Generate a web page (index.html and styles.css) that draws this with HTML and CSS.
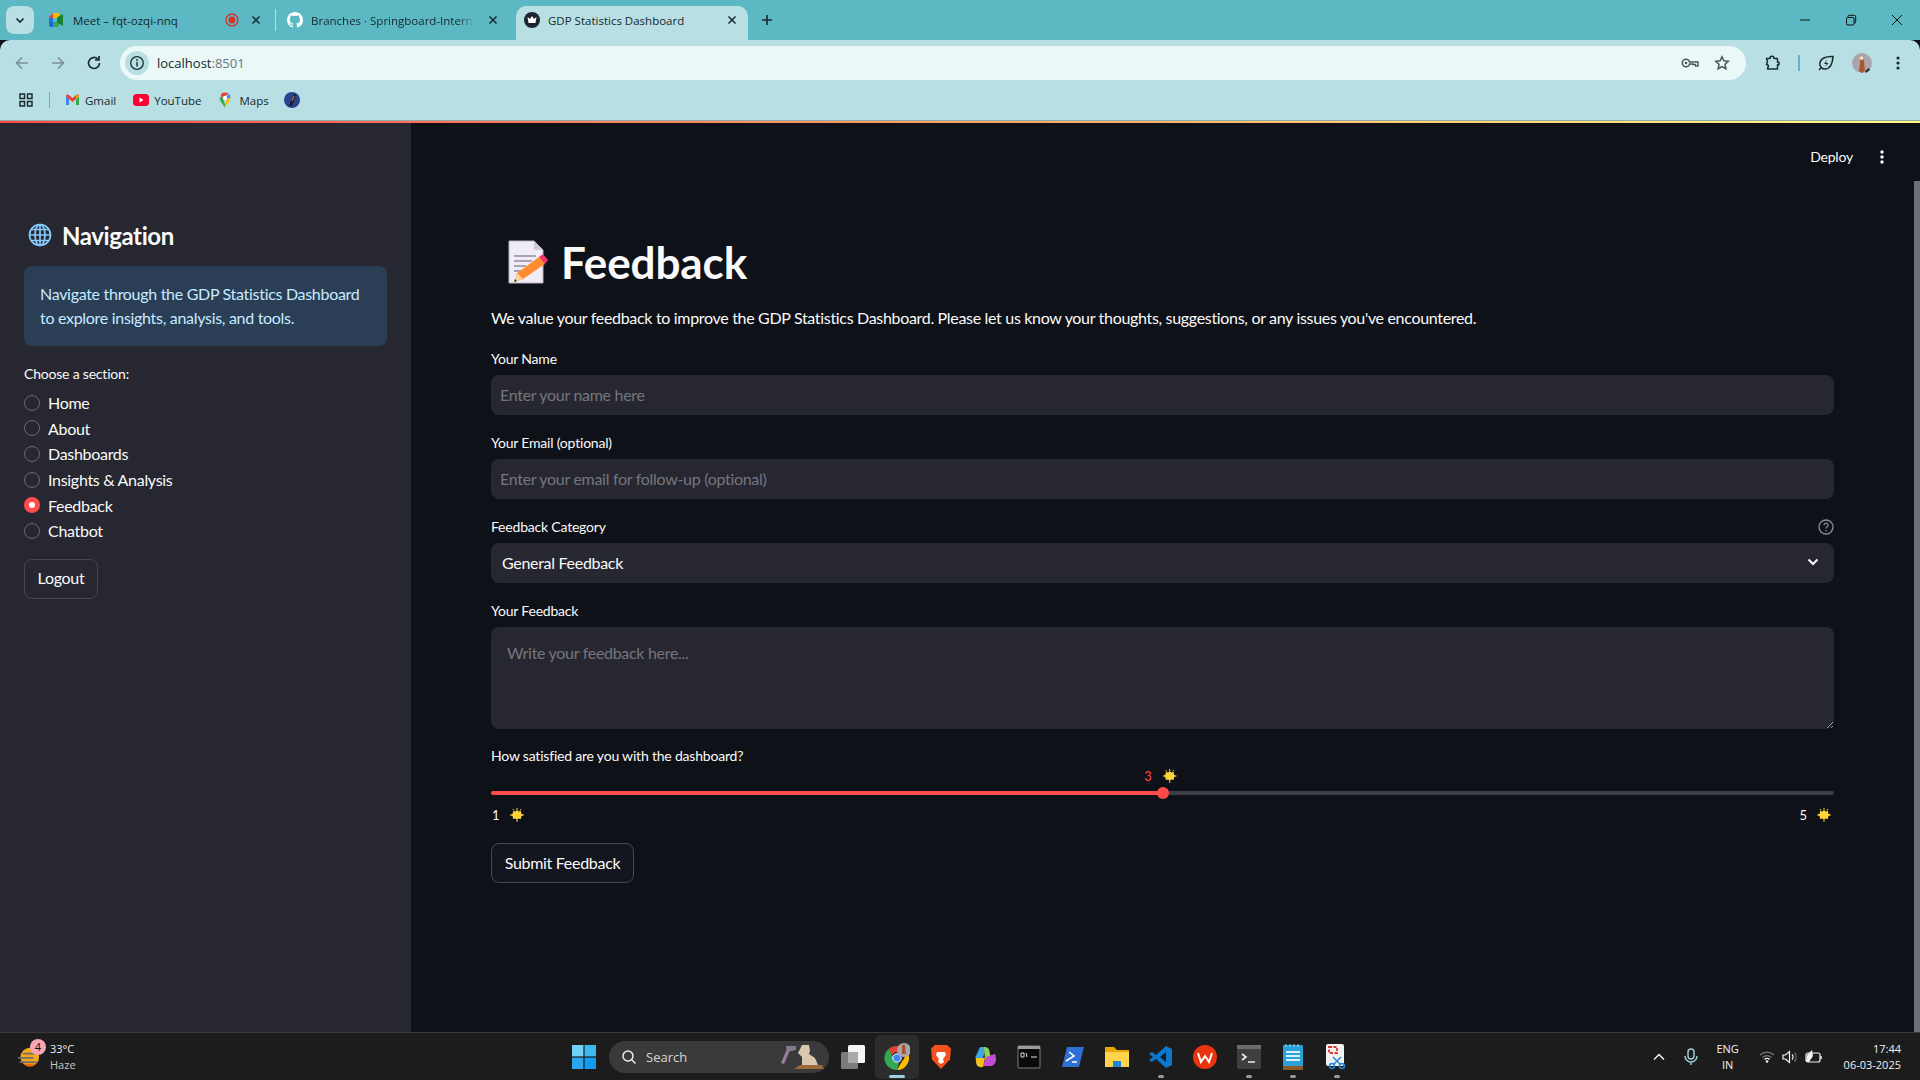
FILE: index.html
```html
<!DOCTYPE html>
<html lang="en">
<head>
  <meta charset="UTF-8" />
  <title>GDP Statistics Dashboard</title>
  <link rel="stylesheet" href="styles.css">
</head>
<body>
  <!-- browser window top -->
  <div class="tabstrip">
    <div class="tab-search"><svg width="12" height="12" viewBox="0 0 12 12"><path d="M2.5 4.5 6 8l3.5-3.5" fill="none" stroke="#16292c" stroke-width="1.7"/></svg></div>
    <div class="tab tab-meet">
      <svg class="favicon" width="16" height="16" viewBox="0 0 16 16"><path d="M1 5 5 1v5H1z" fill="#ea4335"/><path d="M5 1h6v5H5z" fill="#fbbc04"/><path d="M1 6h4v4H1z" fill="#1a73e8"/><path d="M1 10h4v5H3a2 2 0 0 1-2-2z" fill="#1967d2"/><path d="M5 10h6v3a2 2 0 0 1-2 2H5z" fill="#34a853"/><path d="M9 5.5v5l6 3.5V2z" fill="#188038"/></svg>
      <span class="tab-title">Meet – fqt-ozqi-nnq</span>
      <svg class="rec" width="14" height="14" viewBox="0 0 14 14"><circle cx="7" cy="7" r="6" fill="none" stroke="#d93025" stroke-width="1.3"/><circle cx="7" cy="7" r="3.4" fill="#d93025"/></svg>
      <svg class="close" width="10" height="10" viewBox="0 0 10 10"><path d="m1.5 1.5 7 7m0-7-7 7" stroke="#16292c" stroke-width="1.5"/></svg>
    </div>
    <div class="tab-sep"></div>
    <div class="tab tab-github">
      <svg class="favicon" width="16" height="16" viewBox="0 0 16 16"><path fill="#fff" d="M8 0C3.6 0 0 3.6 0 8c0 3.5 2.300 6.500 5.500 7.600.4.100.5-.2.5-.4v-1.400c-2.200.5-2.700-1-2.700-1-.4-.9-.9-1.200-.9-1.200-.7-.5.1-.5.1-.5.8.1 1.200.8 1.200.8.7 1.200 1.900.9 2.300.7.1-.5.3-.9.5-1.100-1.800-.2-3.700-.9-3.700-4 0-.9.3-1.600.8-2.100-.1-.2-.4-1 .1-2.100 0 0 .7-.2 2.200.8a7.600 7.600 0 0 1 4 0c1.500-1 2.200-.8 2.200-.8.4 1.100.2 1.900.1 2.100.5.6.8 1.300.8 2.100 0 3.100-1.900 3.700-3.700 3.900.3.300.6.800.6 1.500v2.200c0 .2.100.5.600.4A8 8 0 0 0 16 8c0-4.400-3.600-8-8-8z"/></svg>
      <span class="tab-title tab-fade">Branches · Springboard-Internsh</span>
      <svg class="close" width="10" height="10" viewBox="0 0 10 10"><path d="m1.5 1.5 7 7m0-7-7 7" stroke="#16292c" stroke-width="1.5"/></svg>
    </div>
    <div class="tab tab-active">
      <svg class="favicon" width="16" height="16" viewBox="0 0 16 16"><circle cx="8" cy="8" r="8" fill="#1d2530"/><path d="M3.500 5 6 7l2-3 2 3 2.500-2-1 6h-7z" fill="#fff"/></svg>
      <span class="tab-title">GDP Statistics Dashboard</span>
      <svg class="close" width="10" height="10" viewBox="0 0 10 10"><path d="m1.5 1.5 7 7m0-7-7 7" stroke="#16292c" stroke-width="1.5"/></svg>
    </div>
    <svg class="new-tab" width="12" height="12" viewBox="0 0 12 12"><path d="M6 1v10M1 6h10" stroke="#16292c" stroke-width="1.6"/></svg>
    <div class="win-controls">
      <svg width="12" height="12" viewBox="0 0 12 12"><path d="M1 6h10" stroke="#111" stroke-width="1"/></svg>
      <svg width="12" height="12" viewBox="0 0 12 12"><path d="M3 3.500V2.500a1.200 1.200 0 0 1 1.200-1.200h5a1.500 1.500 0 0 1 1.500 1.500v5a1.200 1.200 0 0 1-1.200 1.200H9" fill="none" stroke="#111"/><rect x="1.500" y="3.500" width="7.500" height="7.500" rx="1.200" fill="none" stroke="#111"/></svg>
      <svg width="12" height="12" viewBox="0 0 12 12"><path d="m1 1 10 10m0-10L1 11" stroke="#111" stroke-width="1"/></svg>
    </div>
  </div>

  <div class="toolbar">
    <svg class="nav-icon" width="16" height="16" viewBox="0 0 16 16"><path d="M14 8H3m5-5.500L2.500 8 8 13.500" fill="none" stroke="#7b9296" stroke-width="1.600"/></svg>
    <svg class="nav-icon" width="16" height="16" viewBox="0 0 16 16"><path d="M2 8h11M8 2.500 13.500 8 8 13.500" fill="none" stroke="#7b9296" stroke-width="1.600"/></svg>
    <svg class="nav-icon" width="16" height="16" viewBox="0 0 16 16"><path d="M13.500 8A5.500 5.500 0 1 1 11.800 4M13 1v4H9" fill="none" stroke="#1c2b2e" stroke-width="1.700"/></svg>
    <div class="omnibox">
      <div class="site-info"><svg width="16" height="16" viewBox="0 0 16 16"><circle cx="8" cy="8" r="6.300" fill="none" stroke="#1c2b2e" stroke-width="1.300"/><path d="M8 7v4.500" stroke="#1c2b2e" stroke-width="1.400"/><circle cx="8" cy="5" r=".9" fill="#1c2b2e"/></svg></div>
      <span class="url">localhost<span class="url-port">:8501</span></span>
      <svg class="omni-key" width="18" height="12" viewBox="0 0 18 12"><circle cx="5" cy="6" r="3.700" fill="none" stroke="#4a5558" stroke-width="1.600"/><circle cx="5" cy="6" r="1.300" fill="#4a5558"/><path d="M8.500 5H17v4h-2.500V7.500H12V7H8.500" fill="#fff" stroke="#4a5558" stroke-width="1.400"/></svg>
      <svg class="omni-star" width="16" height="16" viewBox="0 0 16 16"><path d="m8 1.800 1.900 4 4.400.5-3.300 3 .9 4.400L8 11.500l-3.900 2.200.9-4.400-3.300-3 4.400-.5z" fill="none" stroke="#4a5558" stroke-width="1.500"/></svg>
    </div>
    <svg class="tool-ext" width="16" height="16" viewBox="0 0 16 16"><path d="M1.500 3.500h3.500a2 2 0 0 1 4-.5V3.500h3.500v3.700h1.500v2.500h-1.500V14H2.500l1-3.500-2-1 1-3z" fill="none" stroke="#1c2b2e" stroke-width="1.500" stroke-linejoin="round"/></svg>
    <div class="tool-sep"></div>
    <svg class="tool-leaf" width="16" height="16" viewBox="0 0 16 16"><path d="M15 1.500C8 1 2 3.500 1.800 9c-.1 3 2.400 5 5.200 5 5.500 0 7.500-6 8-12.500zM1 15l3-3" fill="none" stroke="#1c2b2e" stroke-width="1.500"/><path d="M9 5 6 9h2.500L7 12l3.500-4H8z" fill="#1c2b2e"/></svg>
    <svg class="tool-avatar" width="20" height="20" viewBox="0 0 20 20"><circle cx="10" cy="10" r="10" fill="#a9a5ab"/><path d="M8 3h3l1 6 1 8-3 3-3-2 1-8z" fill="#a8562c"/><circle cx="9.500" cy="5" r="2" fill="#f0dccb"/><path d="M13 18l4-3 1 2-4 3z" fill="#2b2b2b"/></svg>
    <svg class="tool-menu" width="4" height="14" viewBox="0 0 4 14"><circle cx="2" cy="2" r="1.600" fill="#1c2b2e"/><circle cx="2" cy="7" r="1.600" fill="#1c2b2e"/><circle cx="2" cy="12" r="1.600" fill="#1c2b2e"/></svg>
  </div>

  <div class="bookmarks">
    <svg class="apps" width="14" height="14" viewBox="0 0 14 14"><g fill="none" stroke="#1c2b2e" stroke-width="1.500"><rect x="1" y="1" width="4.500" height="4.500"/><rect x="8.500" y="1" width="4.500" height="4.500"/><rect x="1" y="8.500" width="4.500" height="4.500"/><rect x="8.500" y="8.500" width="4.500" height="4.500"/></g></svg>
    <div class="bm-sep"></div>
    <div class="bm bm-gmail"><svg width="15" height="14" viewBox="0 0 15 14"><path d="M1 3v9h3V6z" fill="#4285f4"/><path d="M11 6v6h3V3z" fill="#34a853"/><path d="M1 3c0-1.500 1.500-2 2.500-1.300L7.500 5l4-3.300C12.500 1 14 1.500 14 3l-3 3-3.500 3L4 6z" fill="#ea4335"/><path d="M11 6V2l3 1z" fill="#fbbc04"/></svg><span>Gmail</span></div>
    <div class="bm bm-youtube"><svg width="16" height="14" viewBox="0 0 16 14"><rect y="1" width="16" height="12" rx="3.500" fill="#ff0033"/><path d="m6.500 4.500 4 2.500-4 2.500z" fill="#fff"/></svg><span>YouTube</span></div>
    <div class="bm bm-maps"><svg width="12" height="16" viewBox="0 0 12 16"><path d="M6 16C4 12 .5 9.500.5 5.800L3 4l3 8z" fill="#34a853"/><path d="M6 16c2-4 5.500-6.500 5.500-10.200L8.500 6 6 12z" fill="#fbbc04"/><path d="M11.500 5.800a5.500 5.500 0 0 0-2-4.200L7 6.500z" fill="#4285f4"/><path d="M9.500 1.600A5.500 5.500 0 0 0 1.500 3L4 6z" fill="#ea4335"/><circle cx="6" cy="5.800" r="2" fill="#fff"/></svg><span>Maps</span></div>
    <svg class="bm-last" width="16" height="16" viewBox="0 0 16 16"><circle cx="8" cy="8" r="8" fill="#28428f"/><path d="m5 14 5-12 2 1-4 11z" fill="#1d1a17"/><path d="m8 9 2-5" stroke="#c86f2e" stroke-width="1.200"/></svg>
  </div>
  <div class="decoration"></div>

  <div class="app">
    <aside class="sidebar">
      <h2 class="nav-title">
        <svg width="24" height="24" viewBox="0 0 24 24"><g fill="none" stroke="#86c9fb" stroke-width="1.700"><circle cx="12" cy="12" r="10.500"/><ellipse cx="12" cy="12" rx="5" ry="10.500"/><path d="M12 1.500v21M1.500 12h21M3 6.500h18M3 17.500h18"/></g></svg>
        Navigation
      </h2>
      <div class="nav-info">Navigate through the GDP Statistics Dashboard to explore insights, analysis, and tools.</div>
      <div class="nav-label">Choose a section:</div>
      <div class="radios">
        <div class="radio"><span class="dot"></span>Home</div>
        <div class="radio"><span class="dot"></span>About</div>
        <div class="radio"><span class="dot"></span>Dashboards</div>
        <div class="radio"><span class="dot"></span>Insights &amp; Analysis</div>
        <div class="radio radio-on"><span class="dot"></span>Feedback</div>
        <div class="radio"><span class="dot"></span>Chatbot</div>
      </div>
      <button class="btn btn-side">Logout</button>
    </aside>

    <main class="main">
      <div class="topbar">
        <span class="deploy">Deploy</span>
        <svg width="4" height="14" viewBox="0 0 4 14"><circle cx="2" cy="2" r="1.700" fill="#fafafa"/><circle cx="2" cy="7" r="1.700" fill="#fafafa"/><circle cx="2" cy="12" r="1.700" fill="#fafafa"/></svg>
      </div>
      <div class="content">
        <h1 class="page-title">
          <svg width="44" height="44" viewBox="0 0 44 44"><path d="M4 1h25l9 9v33H4z" fill="#f1edf8" stroke="#b9b2c4"/><path d="M29 1v9h9z" fill="#cfc9d6"/><path d="M9 16h22M9 21h18M9 26h12M9 31h7" stroke="#a8a2b2" stroke-width="1.800"/><path d="m9 42 3-9 22-16 6 7-22 15z" fill="#ff8c2e"/><path d="m34 17 4-3 5 6-3 4z" fill="#f4336a"/><path d="m9 42 3-9 6 6z" fill="#fbd2a0"/><path d="m9 42 1-3 2 2z" fill="#333"/></svg>
          Feedback
        </h1>
        <p class="intro">We value your feedback to improve the GDP Statistics Dashboard. Please let us know your thoughts, suggestions, or any issues you've encountered.</p>

        <label class="field-label">Your Name</label>
        <input class="field-input" type="text" placeholder="Enter your name here" />

        <label class="field-label field-next">Your Email (optional)</label>
        <input class="field-input" type="text" placeholder="Enter your email for follow-up (optional)" />

        <label class="field-label field-next field-help">Feedback Category
          <svg width="16" height="16" viewBox="0 0 16 16"><circle cx="8" cy="8" r="7" fill="none" stroke="#8a8c93" stroke-width="1.300"/><path d="M6 6.200a2 2 0 1 1 3 1.800c-.7.400-1 .8-1 1.500" fill="none" stroke="#8a8c93" stroke-width="1.300"/><circle cx="8" cy="11.800" r=".8" fill="#8a8c93"/></svg>
        </label>
        <div class="field-select">General Feedback
          <svg width="12" height="8" viewBox="0 0 12 8"><path d="M1.500 1.500 6 6l4.500-4.500" fill="none" stroke="#fafafa" stroke-width="2"/></svg>
        </div>

        <label class="field-label field-next">Your Feedback</label>
        <textarea class="field-area" placeholder="Write your feedback here..."></textarea>

        <label class="field-label slider-label">How satisfied are you with the dashboard?</label>
        <div class="slider">
          <div class="slider-value" style="left: 50%">3 <svg class="sun" width="14" height="14" viewBox="0 0 14 14"><use href="#sun"/></svg></div>
          <div class="slider-track"><div class="slider-fill" style="width: 50%"></div><span class="slider-thumb" style="left: 50%"></span></div>
          <div class="slider-ends">
            <span>1 <svg class="sun" width="14" height="14" viewBox="0 0 14 14"><use href="#sun"/></svg></span>
            <span>5 <svg class="sun" width="14" height="14" viewBox="0 0 14 14"><use href="#sun"/></svg></span>
          </div>
        </div>
        <button class="btn btn-main">Submit Feedback</button>
      </div>
      <div class="scrollbar"></div>
    </main>
  </div>

  <svg class="defs" width="0" height="0"><symbol id="sun" viewBox="0 0 14 14"><path d="m7 2 1.600 1.500L11 3l.2 2.400L13 7l-1.800 1.500L11 11l-2.400-.4L7 12l-1.600-1.400L3 11l-.2-2.500L1 7l1.800-1.600L3 3l2.400.5z" fill="#ffd43a"/><path d="M7 0v2M7 12v2M0 7h2M12 7h2M3 1l1 1.500M11 1l-1 1.500" stroke="#ffd43a"/></symbol></svg>

  <footer class="taskbar">
    <div class="weather">
      <svg class="weather-icon" width="22" height="22" viewBox="0 0 26 26"><circle cx="14" cy="13" r="11" fill="#f5a81c"/><path d="M6 21a11 11 0 0 0 16 0z" fill="#ef6c00"/><path d="M0 14h18M2 19h20M6 9h14" stroke="#6e6e6e" stroke-width="2"/></svg>
      <span class="weather-badge">4</span>
      <div class="weather-text"><div>33°C</div><div class="weather-sub">Haze</div></div>
    </div>
    <div class="task-center">
      <svg class="start" width="24" height="24" viewBox="0 0 24 24"><rect width="11.400" height="11.400" fill="#6fd3f7"/><rect x="12.600" width="11.400" height="11.400" fill="#3fb8f2"/><rect y="12.600" width="11.400" height="11.400" fill="#2ba6ee"/><rect x="12.600" y="12.600" width="11.400" height="11.400" fill="#129cf0"/></svg>
      <div class="search">
        <svg width="16" height="16" viewBox="0 0 16 16"><circle cx="7" cy="7" r="5" fill="none" stroke="#ececec" stroke-width="1.500"/><path d="m10.500 10.500 4 4" stroke="#ececec" stroke-width="1.500"/></svg>
        <span>Search</span>
        <svg class="search-art" width="48" height="28" viewBox="0 0 48 28"><path d="M3 20 9 6l3 1-6 14z" fill="#9a7f9e"/><path d="M8 3h10v4l-9 2z" fill="#7f7f90"/><path d="M16 26 22 22h22l2 4z" fill="#9c6a3a"/><path d="M24 22v-8l-4-4 4-8h7l1 6-1 3 6 4 3 7z" fill="#d8c8ad"/></svg>
      </div>
      <div class="task-apps">
        <div class="task-app">
          <svg width="24" height="24" viewBox="0 0 24 24"><rect x="7" width="17" height="18" rx="1.500" fill="#f4f4f4"/><rect y="7" width="17" height="17" rx="1.500" fill="#7c7c7c"/><rect x="7" y="7" width="10" height="11" fill="#a9a9a9"/></svg>
        </div>
        <div class="task-app task-app-on">
          <svg width="26" height="28" viewBox="0 0 26 28"><path d="M13 3a12 12 0 0 1 10.400 6H13a5 5 0 0 0-4.700 3.300L4.500 6A12 12 0 0 1 13 3z" fill="#ea4335"/><path d="M23.400 9A12 12 0 0 1 13 27l5.200-9a5 5 0 0 0-.8-9z" fill="#fbbc04"/><path d="M13 27A12 12 0 0 1 4.500 6l4.800 8.300A5 5 0 0 0 15 20z" fill="#34a853"/><circle cx="13" cy="15" r="4.200" fill="#4285f4" stroke="#fff"/><circle cx="20" cy="7" r="7" fill="#a9a5ab"/><path d="M18 2h3l1 9h-4z" fill="#a8562c"/></svg>
          <span class="task-active"></span>
        </div>
        <div class="task-app">
          <svg width="24" height="26" viewBox="0 0 24 26"><path d="M6 1h12l4 3.500-1 11L12 25 3 15.500l-1-11z" fill="#f4511e"/><path d="M8 8h8l1 3-3 4 1 3-3 2-3-2 1-3-3-4z" fill="#fff"/></svg>
        </div>
        <div class="task-app">
          <svg width="24" height="24" viewBox="0 0 24 24"><path d="M7 2h6l-3 11H2z" fill="#39a7e8"/><path d="M11 2c5 0 5 2 6 7l2 8-7-1z" fill="#8fd14f"/><path d="M22 9c2 5 1 10-3 12H10l3-9z" fill="#c44dd6"/><path d="M3 13h9l-2 9c-4 1-8-1-7-9z" fill="#f2c21a"/></svg>
        </div>
        <div class="task-app">
          <svg width="24" height="24" viewBox="0 0 24 24"><rect x="1" y="1" width="22" height="22" rx="1" fill="#0a0a0a" stroke="#7f7f7f"/><rect x="1" y="1" width="22" height="3" fill="#9a9a9a"/><path d="M4 8h3v4H4zM9 8l1 4M14 12h6" stroke="#ddd"/></svg>
        </div>
        <div class="task-app">
          <svg width="24" height="24" viewBox="0 0 24 24"><path d="M6 2h17l-5 20H1z" fill="#2f6fd6"/><path d="m8 7 5 4-8 5M11 17h5" fill="none" stroke="#fff" stroke-width="1.600"/></svg>
        </div>
        <div class="task-app">
          <svg width="24" height="24" viewBox="0 0 24 24"><path d="M0 2h9l3 3h12v4H0z" fill="#e8a80a"/><path d="M0 7h24v15H0z" fill="#ffd34d"/><path d="M8 16h8v6H8z" fill="#1a86d8"/></svg>
        </div>
        <div class="task-app">
          <svg width="24" height="24" viewBox="0 0 24 24"><path d="M17 1 7 10 3 7 0 9l4 3-4 3 3 2 4-3 10 9 6-3V4z" fill="#0a78cf"/><path d="M17 7v10l-6-5z" fill="#1c1c1c"/></svg>
          <span class="task-dot"></span>
        </div>
        <div class="task-app">
          <svg width="24" height="24" viewBox="0 0 24 24"><circle cx="12" cy="12" r="12" fill="#e8350f"/><path d="m5 8 3 9 4-6 4 6 3-9" fill="none" stroke="#fff" stroke-width="2"/></svg>
        </div>
        <div class="task-app">
          <svg width="24" height="24" viewBox="0 0 24 24"><rect width="24" height="24" rx="2" fill="#3f3f3f"/><rect width="24" height="4" fill="#6b6b6b"/><path d="m5 9 4 3-4 3M11 17h7" fill="none" stroke="#f0f0f0" stroke-width="1.600"/></svg>
          <span class="task-dot"></span>
        </div>
        <div class="task-app">
          <svg width="20" height="26" viewBox="0 0 20 26"><rect y="1" width="20" height="25" rx="1" fill="#2aa2d6"/><path d="M3 0v3M7 0v3M11 0v3M15 0v3" stroke="#9adcf5"/><path d="M3 8h14M3 12h14M3 16h14" stroke="#d8f3fd" stroke-width="2"/><rect y="22" width="20" height="4" fill="#8a5a2b"/></svg>
          <span class="task-dot"></span>
        </div>
        <div class="task-app">
          <svg width="24" height="26" viewBox="0 0 24 26"><rect x="1" y="0" width="18" height="22" rx="2" fill="#f2f2f2"/><path d="M4 3h8v6H4z" fill="none" stroke="#d9362a" stroke-width="1.800" stroke-dasharray="3 1.500"/><path d="m8 13 8 8m0-8-8 8" stroke="#2385d6" stroke-width="1.500"/><circle cx="7" cy="22" r="2.500" fill="none" stroke="#2385d6" stroke-width="1.500"/><circle cx="17" cy="22" r="2.500" fill="none" stroke="#2385d6" stroke-width="1.500"/></svg>
          <span class="task-dot"></span>
        </div>
      </div>
    </div>
    <div class="tray">
      <svg class="tray-chevron" width="12" height="8" viewBox="0 0 12 8"><path d="M1 6.500 6 1.500l5 5" fill="none" stroke="#f2f2f2" stroke-width="1.500"/></svg>
      <svg class="tray-mic" width="14" height="18" viewBox="0 0 14 18"><rect x="4" y="1" width="6" height="10" rx="3" fill="none" stroke="#9ed0da" stroke-width="1.400"/><path d="M1 8a6 6 0 0 0 12 0M7 14v3" fill="none" stroke="#9ed0da" stroke-width="1.400"/></svg>
      <div class="tray-lang"><div>ENG</div><div>IN</div></div>
      <svg class="tray-wifi" width="16" height="14" viewBox="0 0 16 14"><path d="M1 5a10 10 0 0 1 14 0M3.500 7.500a6.500 6.500 0 0 1 9 0" fill="none" stroke="#777" stroke-width="1.200"/><path d="M5.500 9.500a3.500 3.500 0 0 1 5 0" fill="none" stroke="#f2f2f2" stroke-width="1.300"/><circle cx="8" cy="11.500" r="1.300" fill="#f2f2f2"/></svg>
      <svg class="tray-sound" width="16" height="14" viewBox="0 0 16 14"><path d="M1 5h2.500L7.500 1.500v11L3.500 9H1z" fill="none" stroke="#f2f2f2" stroke-width="1.200"/><path d="M10 4.500a3.500 3.500 0 0 1 0 5" fill="none" stroke="#f2f2f2" stroke-width="1.200"/><path d="M12.500 2.500a7 7 0 0 1 0 9" fill="none" stroke="#777" stroke-width="1.200"/></svg>
      <svg class="tray-battery" width="18" height="14" viewBox="0 0 18 14"><rect x="1" y="3" width="14" height="9" rx="2" fill="none" stroke="#f2f2f2" stroke-width="1.200"/><path d="M16 6v3" stroke="#f2f2f2" stroke-width="1.500"/><path d="M7 0 2 5l-1 7h3l4-6z" fill="#f2f2f2"/></svg>
      <div class="tray-clock"><div>17:44</div><div>06-03-2025</div></div>
    </div>
  </footer>
</body>
</html>
```

FILE: styles.css
```css
* {
  box-sizing: border-box;
}
html, body {
  margin: 0;
  height: 1080px;
  overflow: hidden;
}
body {
  display: flex;
  flex-direction: column;
  font-family: Lato, "Noto Sans", sans-serif;
  background-color: #0e1117;
  color: #fafafa;
}
.defs {
  position: absolute;
}

/* browser chrome */
.tabstrip {
  height: 40px;
  display: flex;
  align-items: flex-start;
  background-color: #5cb8c2;
  color: #16292c;
  font-size: 11.500px;
  font-family: "Open Sans", sans-serif;
}
.tab-search {
  width: 28px;
  height: 28px;
  margin: 6px 0 0 6px;
  border-radius: 8px;
  background-color: #b8e0e4;
  display: flex;
  align-items: center;
  justify-content: center;
}
.tab {
  height: 28px;
  margin-top: 6px;
  display: flex;
  align-items: center;
  flex: none;
}
.tab-title {
  white-space: nowrap;
}
.tab-meet {
  width: 241px;
  padding-left: 14px;
}
.tab-meet .tab-title {
  margin-left: 9px;
  width: 152px;
}
.tab-meet .close {
  margin-left: 12px;
}
.tab-sep {
  width: 1px;
  height: 22px;
  margin: 9px 0 0 0;
  background-color: #b8e0e4;
}
.tab-github {
  width: 240px;
  padding-left: 11px;
}
.tab-github .tab-title {
  margin-left: 8px;
  width: 164px;
}
.tab-fade {
  -webkit-mask-image: linear-gradient(90deg, #000 90%, transparent);
}
.tab-github .close {
  margin-left: 13px;
}
.tab-active {
  width: 232px;
  height: 34px;
  padding: 0 0 6px 8px;
  background-color: #b8e0e4;
  border-radius: 10px 10px 0 0;
}
.tab-active .tab-title {
  margin-left: 8px;
  width: 179px;
}
.new-tab {
  margin: 14px 0 0 13px;
}
.win-controls {
  margin: 0 4px 0 auto;
  width: 117px;
  height: 40px;
  display: flex;
  align-items: center;
  gap: 34px;
}
.toolbar {
  height: 42px;
  display: flex;
  align-items: center;
  background-color: #b8e0e4;
  border-radius: 10px 10px 0 0;
  padding: 4px 0 0 14px;
}
.nav-icon {
  margin-right: 20px;
}
.omnibox {
  width: 1626px;
  height: 34px;
  margin-left: -2px;
  display: flex;
  align-items: center;
  padding-left: 5px;
  background-color: #ebf8f8;
  border-radius: 17px;
  font-family: "Open Sans", sans-serif;
  font-size: 13px;
  color: #16292c;
}
.site-info {
  width: 24px;
  height: 24px;
  border-radius: 50%;
  background-color: #b8e0e4;
  display: flex;
  align-items: center;
  justify-content: center;
}
.url {
  margin-left: 8px;
}
.url-port {
  color: #66767a;
}
.omni-key {
  margin-left: auto;
}
.omni-star {
  margin: 0 16px 0 15px;
}
.tool-ext {
  margin-left: 19px;
}
.tool-sep {
  width: 2px;
  height: 16px;
  margin-left: 17px;
  background-color: #5cb8c2;
}
.tool-leaf {
  margin-left: 18px;
}
.tool-avatar {
  margin-left: 18px;
}
.tool-menu {
  margin-left: 24px;
}
.bookmarks {
  height: 38px;
  display: flex;
  align-items: center;
  background-color: #b8e0e4;
  font-family: "Open Sans", sans-serif;
  font-size: 11.500px;
  color: #16292c;
  padding: 0 0 2px 19px;
}
.bm-sep {
  width: 1px;
  height: 16px;
  margin-left: 16px;
  background-color: #5cb8c2;
}
.bm {
  display: flex;
  align-items: center;
  gap: 5px;
}
.bm-gmail {
  margin-left: 15px;
}
.bm-youtube {
  margin-left: 17px;
}
.bm-maps {
  margin-left: 17px;
  gap: 9px;
}
.bm-last {
  margin-left: 15px;
}
.decoration {
  height: 3px;
  border-top: 1px solid #8fa9ac;
  background: linear-gradient(90deg, #ff4b4b, #fffd80);
  flex: none;
}

/* streamlit app */
.app {
  flex: 1;
  display: flex;
  min-height: 0;
}
.sidebar {
  width: 411px;
  flex: none;
  padding: 96px 24px 0;
  background-color: #262730;
}
.nav-title {
  margin: 0 0 15px;
  display: flex;
  align-items: center;
  gap: 10px;
  padding-left: 4px;
  height: 32px;
  font-size: 24px;
  font-weight: 700;
  letter-spacing: -0.4px;
}
.nav-info {
  height: 80px;
  padding: 16px;
  background-color: #2a3e56;
  border-radius: 8px;
  color: #c7ebff;
  font-size: 16px;
  line-height: 24px;
  letter-spacing: -0.3px;
}
.nav-label {
  margin-top: 18px;
  height: 20px;
  line-height: 20px;
  font-size: 14px;
  letter-spacing: -0.2px;
}
.radios {
  margin-top: 6px;
}
.radio {
  display: flex;
  align-items: center;
  gap: 8px;
  height: 25.600px;
  font-size: 16px;
  letter-spacing: -0.3px;
}
.dot {
  width: 16px;
  height: 16px;
  border-radius: 50%;
  border: 1px solid #6a6c75;
  background-color: #262730;
}
.radio-on .dot {
  border: 5px solid #ff4b4b;
  background-color: #fff;
}
.btn {
  display: block;
  height: 40px;
  padding: 0 0 2px;
  border: 1px solid #46474f;
  border-radius: 8px;
  color: #fafafa;
  font-family: inherit;
  font-size: 16px;
  letter-spacing: -0.3px;
}
.btn-side {
  margin-top: 15px;
  width: 74px;
  background-color: #262730;
}
.btn-main {
  margin-top: 18px;
  width: 143px;
  background-color: #13161e;
}
.main {
  flex: 1;
  position: relative;
  min-width: 0;
}
.topbar {
  height: 68px;
  display: flex;
  align-items: center;
  justify-content: flex-end;
  gap: 27px;
  padding: 0 36px 1px 0;
  font-size: 14px;
  letter-spacing: -0.2px;
}
.content {
  padding: 42px 86px 0 80px;
}
.page-title {
  margin: 0 0 13px;
  height: 60px;
  display: flex;
  align-items: center;
  gap: 12px;
  padding: 0 0 2px 14px;
  font-size: 44px;
  font-weight: 700;
  letter-spacing: -0.1px;
}
.intro {
  margin: 0 0 19px;
  height: 24px;
  line-height: 24px;
  font-size: 16px;
  letter-spacing: -0.32px;
  white-space: nowrap;
}
.field-label {
  display: block;
  height: 20px;
  margin-bottom: 6px;
  line-height: 20px;
  font-size: 14px;
  letter-spacing: -0.2px;
}
.field-next {
  margin-top: 18px;
}
.field-help {
  display: flex;
  align-items: center;
  justify-content: space-between;
}
.field-input, .field-select, .field-area {
  display: block;
  width: 100%;
  border: none;
  outline: none;
  background-color: #262730;
  color: #fafafa;
  border-radius: 8px;
  font-family: inherit;
  font-size: 16px;
  letter-spacing: -0.3px;
}
.field-input {
  height: 40px;
  padding: 0 9px 2px;
}
.field-select {
  height: 40px;
  padding: 0 15px 2px 11px;
  display: flex;
  align-items: center;
  justify-content: space-between;
}
.field-area {
  height: 102px;
  padding: 16px 16px 16px;
  color-scheme: dark;
  resize: vertical;
}
.field-input::placeholder, .field-area::placeholder {
  color: #75767d;
  opacity: 1;
}
.slider-label {
  margin: 17px 0 0;
}
.slider {
  position: relative;
  padding-top: 25px;
  font-size: 13px;
}
.slider-value {
  position: absolute;
  top: 0;
  height: 20px;
  line-height: 20px;
  transform: translateX(-50%);
  color: #ff4b4b;
  display: flex;
  align-items: center;
  gap: 11px;
  margin-left: -2px;
}
.slider-track {
  position: relative;
  height: 4px;
  border-radius: 2px;
  background-color: #3c3d45;
}
.slider-fill {
  height: 4px;
  border-radius: 2px;
  background-color: #ff4b4b;
}
.slider-thumb {
  position: absolute;
  top: -4px;
  width: 12px;
  height: 12px;
  margin-left: -6px;
  border-radius: 50%;
  background-color: #ff4b4b;
}
.slider-ends {
  display: flex;
  justify-content: space-between;
  height: 20px;
  margin-top: 10px;
  line-height: 20px;
}
.slider-ends span {
  display: flex;
  align-items: center;
  gap: 10px;
  padding-right: 3px;
}
.slider-ends span:first-child {
  padding-left: 1px;
}
.scrollbar {
  position: absolute;
  top: 58px;
  right: 0;
  bottom: 0;
  width: 6px;
  background-color: #6f7075;
}

/* windows taskbar */
.taskbar {
  height: 48px;
  flex: none;
  position: relative;
  display: flex;
  align-items: center;
  background-color: #1c1c1c;
  border-top: 1px solid #3a3a3c;
  font-family: "Open Sans", sans-serif;
  font-size: 11px;
  color: #f2f2f2;
}
.weather {
  position: relative;
  width: 560px;
  display: flex;
  align-items: center;
  padding-left: 18px;
}
.weather-badge {
  position: absolute;
  left: 30px;
  top: -2px;
  width: 16px;
  height: 16px;
  border-radius: 50%;
  background-color: #f7a8b4;
  color: #111;
  font-size: 11px;
  line-height: 16px;
  text-align: center;
}
.weather-text {
  margin-left: 10px;
  line-height: 16px;
}
.weather-sub {
  color: #c9c9c9;
}
.task-center {
  display: flex;
  align-items: center;
}
.start {
  margin-left: 12px;
}
.search {
  width: 220px;
  height: 32px;
  margin-left: 13px;
  display: flex;
  align-items: center;
  gap: 9px;
  padding: 0 3px 0 12px;
  border-radius: 16px;
  background-color: #3a3a3a;
  font-size: 13px;
  color: #d6d6d6;
}
.search-art {
  margin-left: auto;
}
.task-apps {
  display: flex;
  margin-left: 2px;
}
.task-app {
  position: relative;
  width: 44px;
  height: 44px;
  display: flex;
  align-items: center;
  justify-content: center;
}
.task-app-on {
  background-color: #2c2c2c;
  border-radius: 5px;
}
.task-active {
  position: absolute;
  left: 14px;
  bottom: 1px;
  width: 16px;
  height: 3px;
  border-radius: 2px;
  background-color: #9fd0e0;
}
.task-dot {
  position: absolute;
  left: 19px;
  bottom: 1px;
  width: 6px;
  height: 3px;
  border-radius: 2px;
  background-color: #9a9a9a;
}
.tray {
  position: absolute;
  right: 19px;
  top: 0;
  height: 47px;
  display: flex;
  align-items: center;
}
.tray-chevron {
  margin-right: 19px;
}
.tray-mic {
  margin-right: 8px;
}
.tray-lang {
  width: 44px;
  text-align: center;
  line-height: 16px;
  margin-right: 9px;
}
.tray-wifi {
  margin-right: 7px;
}
.tray-sound {
  margin-right: 7px;
}
.tray-battery {
  margin-right: 21px;
}
.tray-clock {
  text-align: right;
  line-height: 16px;
}
```
